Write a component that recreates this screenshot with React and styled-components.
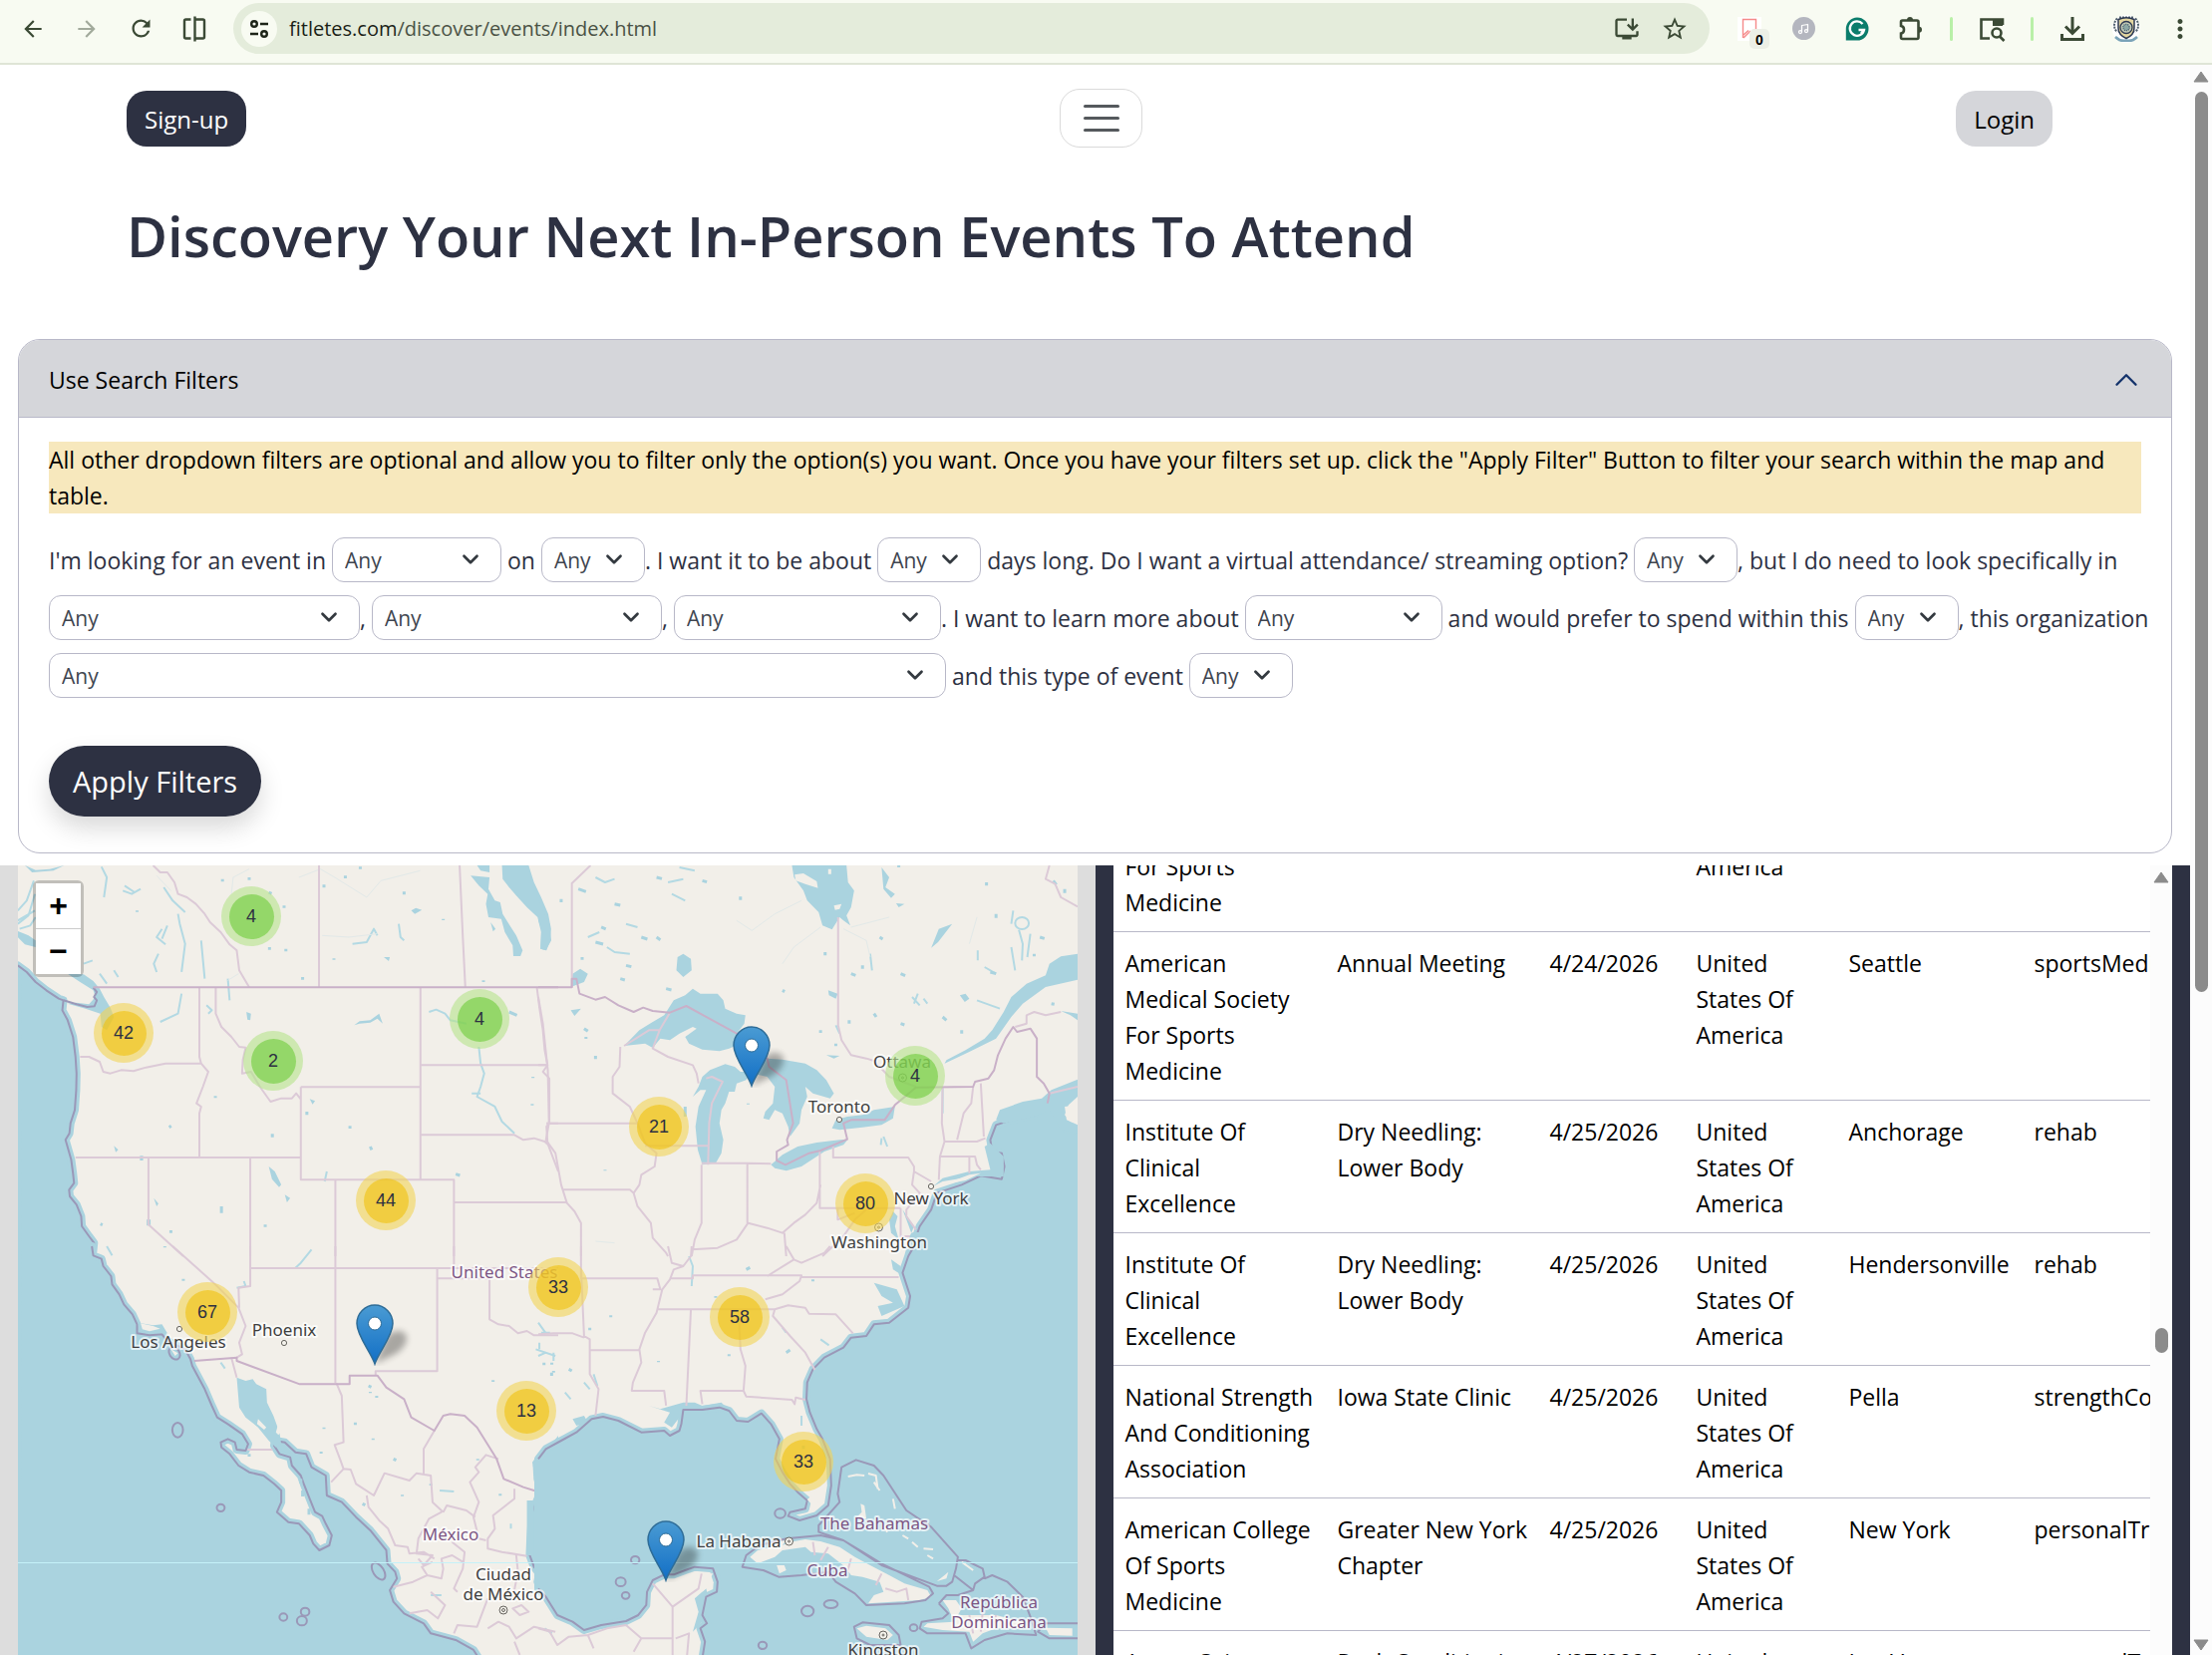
import React, { useLayoutEffect, useRef } from "react";
import styled, { createGlobalStyle } from "styled-components";
import { ChevronDown, ChevronUp, Music } from "lucide-react";
import {
  MdArrowBack,
  MdArrowForward,
  MdRefresh,
  MdOutlineInstallDesktop,
  MdStarBorder,
  MdMoreVert,
} from "react-icons/md";

const navy = "#2d3142";
const line = "#b8b8c8";
const water = "#aad3df";
const land = "#f2efe9";

const clusters = [
  { count: 4, x: 234, y: 51 },
  { count: 42, x: 106, y: 168 },
  { count: 2, x: 256, y: 196 },
  { count: 4, x: 463, y: 154 },
  { count: 44, x: 369, y: 336 },
  { count: 21, x: 643, y: 262 },
  { count: 4, x: 900, y: 211 },
  { count: 80, x: 850, y: 339 },
  { count: 67, x: 190, y: 448 },
  { count: 13, x: 510, y: 547 },
  { count: 33, x: 542, y: 423 },
  { count: 58, x: 724, y: 453 },
  { count: 33, x: 788, y: 598 },
];

const pins = [
  { name: "Las Cruces", x: 358, y: 500 },
  { name: "Michigan", x: 736, y: 221 },
  { name: "Merida", x: 650, y: 717 },
];

const usa = "United States Of America";

const events = [
  ["American Medical Society For Sports Medicine", "Annual Meeting", "4/24/2026", usa, "Seattle", "sportsMedicine"],
  ["American Medical Society For Sports Medicine", "Annual Meeting", "4/24/2026", usa, "Seattle", "sportsMedicine"],
  ["Institute Of Clinical Excellence", "Dry Needling: Lower Body", "4/25/2026", usa, "Anchorage", "rehab"],
  ["Institute Of Clinical Excellence", "Dry Needling: Lower Body", "4/25/2026", usa, "Hendersonville", "rehab"],
  ["National Strength And Conditioning Association", "Iowa State Clinic", "4/25/2026", usa, "Pella", "strengthConditioning"],
  ["American College Of Sports Medicine", "Greater New York Chapter", "4/25/2026", usa, "New York", "personalTraining"],
  ["Aspen Orient Fitness", "Rock Conditioning", "4/27/2026", usa, "Las Vegas", "personalTraining"],
];

const App = () => {
  return (
    <>
      <GlobalStyle />
      <Window>
        <Toolbar />
        <Viewport>
          <Page>
            <Nav>
              <NavButton $dark>Sign-up</NavButton>
              <MenuButton aria-label="Menu">
                <MenuBar />
                <MenuBar />
                <MenuBar />
              </MenuButton>
              <NavButton>Login</NavButton>
            </Nav>
            <Title>Discovery Your Next In-Person Events To Attend</Title>
            <Filters />
            <Results>
              <MapPanel />
              <EventsPanel />
            </Results>
          </Page>
          <ScrollTrack>
            <Arrow viewBox="0 0 16 12">
              <path d="M8 1 L15 11 H1Z" />
            </Arrow>
            <PageThumb />
            <Arrow viewBox="0 0 16 12">
              <path d="M1 1 H15 L8 11Z" />
            </Arrow>
          </ScrollTrack>
        </Viewport>
      </Window>
    </>
  );
};

const Toolbar = () => (
  <Bar>
    <NavIcons>
      <IconButton aria-label="Back">
        <MdArrowBack size={26} />
      </IconButton>
      <IconButton aria-label="Forward" $faded>
        <MdArrowForward size={26} />
      </IconButton>
      <IconButton aria-label="Reload">
        <MdRefresh size={27} />
      </IconButton>
      <IconButton aria-label="Split view">
        <svg width="26" height="28" viewBox="0 0 26 28" fill="none" stroke="currentColor" strokeWidth="2.4">
          <path d="M9.500 4.500H4.500Q3 4.500 3 6V22Q3 23.500 4.500 23.500H9.500M13.500 1.500V26.500M13.500 4.500H21.500Q23 4.500 23 6V22Q23 23.500 21.500 23.500H13.500" />
        </svg>
      </IconButton>
    </NavIcons>
    <AddressBar>
      <SiteInfo aria-label="Site information">
        <svg width="20" height="20" viewBox="0 0 20 20" fill="none" stroke="#1d2418" strokeWidth="2.4">
          <circle cx="5" cy="5" r="2.8" />
          <path d="M11 5H19M1 15H9" />
          <circle cx="15" cy="15" r="2.8" />
        </svg>
      </SiteInfo>
      <Url aria-label="Address">
        <b>fitletes.com</b>/discover/events/index.html
      </Url>
      <IconButton aria-label="Install">
        <MdOutlineInstallDesktop size={28} />
      </IconButton>
      <IconButton aria-label="Bookmark">
        <MdStarBorder size={28} />
      </IconButton>
    </AddressBar>
    <Extensions>
      <IconButton aria-label="Saved items">
        <Saved>
          <svg width="24" height="24" viewBox="0 0 24 24" fill="none" stroke="#f58a8a" strokeWidth="1.4">
            <path d="M5.5 21V2.500H18.500V14M6 21L13 14M6 18L11 13.500" />
          </svg>
          <Badge>0</Badge>
        </Saved>
      </IconButton>
      <IconButton aria-label="Music">
        <MusicDot>
          <Music size={12} strokeWidth={2.5} />
        </MusicDot>
      </IconButton>
      <IconButton aria-label="Grammar">
        <svg width="24" height="24" viewBox="0 0 24 24">
          <path d="M12 .5A11.500 11.500 0 1 1 12 23.500H.8V12A11.500 11.500 0 0 1 12 .5Z" fill="#0b7d6c" />
          <path d="M17.500 7A7.200 7.200 0 1 0 19 13H13.500M16 16.500L19 13" fill="none" stroke="#fff" strokeWidth="2.300" />
        </svg>
      </IconButton>
      <IconButton aria-label="Extensions">
        <svg width="26" height="26" viewBox="0 0 26 26" fill="none" stroke="currentColor" strokeWidth="2.600">
          <path d="M4.500 4.500H19Q20.500 4.500 20.500 6V21.500Q20.500 23 19 23H4.500Q3 23 3 21.500V17.500Q6 17 6 13.700Q6 10.500 3 10V6Q3 4.500 4.500 4.500Z" />
          <path d="M9 4A3 3 0 0 1 15 4ZM21 10.700A3 3 0 0 1 21 16.700Z" fill="currentColor" stroke="none" />
        </svg>
      </IconButton>
      <Divider />
      <IconButton aria-label="Search panel">
        <svg width="28" height="26" viewBox="0 0 28 26" fill="none" stroke="currentColor" strokeWidth="2.600">
          <path d="M12 22.500H3.500V3.500H25V9" />
          <path d="M15 3H25V10H15Z" fill="currentColor" stroke="none" />
          <circle cx="19" cy="17" r="4.500" />
          <path d="M22 20.500L26.500 25" />
        </svg>
      </IconButton>
      <Divider />
      <IconButton aria-label="Downloads">
        <svg width="26" height="26" viewBox="0 0 26 26" fill="none" stroke="currentColor" strokeWidth="3">
          <path d="M13 1V17M6 10.500L13 17.500L20 10.500M2.500 18V23.500H23.500V18" />
        </svg>
      </IconButton>
      <IconButton aria-label="Profile">
        <svg width="28" height="28" viewBox="0 0 28 28">
          <circle cx="14" cy="14" r="14" fill="#fff" />
          <path d="M5 3.500C1 7 1 14 5 17M23 3.500C27 7 27 14 23 17M7 2.500H21" fill="none" stroke="#50606e" strokeWidth="2" strokeDasharray="2 1" />
          <path d="M6 4.500Q14 1 22 4.500V13Q22 20 14 23.500Q6 20 6 13Z" fill="#e3d6a0" stroke="#2c3953" strokeWidth="1.500" />
          <circle cx="14" cy="12.500" r="6" fill="#c3ccb6" stroke="#2c3953" strokeWidth="1.300" />
          <circle cx="14" cy="12.500" r="3.200" fill="#8ba8a4" stroke="#40556a" strokeWidth="1.300" strokeDasharray="1 1" />
          <path d="M3 22Q8 27 14 25.500Q20 27 25 22" fill="none" stroke="#7aa3b8" strokeWidth="2.500" />
        </svg>
      </IconButton>
      <IconButton aria-label="More">
        <MdMoreVert size={30} />
      </IconButton>
    </Extensions>
  </Bar>
);

const Filters = () => (
  <Card>
    <CardHeader>
      Use Search Filters
      <ChevronUp size={38} strokeWidth={1.5} color="#14336b" />
    </CardHeader>
    <CardBody>
      <Note>
        All other dropdown filters are optional and allow you to filter only the option(s) you want. Once you have your
        filters set up. click the "Apply Filter" Button to filter your search within the map and table.
      </Note>
      <Sentence>
        <SentenceRow>
          I'm looking for an event in <Filter name="Month" width={170} /> on <Filter name="Day" width={104} />
          <Tail>. I want it to be about</Tail> <Filter name="Length" width={104} /> days long. Do I want a virtual
          attendance/ streaming option? <Filter name="Virtual" width={104} />
          <Tail>, but I do need to look specifically in</Tail>
        </SentenceRow>
        <SentenceRow>
          <Filter name="Country" width={312} />
          <Tail>,</Tail> <Filter name="State" width={291} />
          <Tail>,</Tail> <Filter name="City" width={268} />
          <Tail>. I want to learn more about</Tail> <Filter name="Topic" width={198} /> and would prefer to spend within
          this <Filter name="Price" width={104} />
          <Tail>, this organization</Tail>
        </SentenceRow>
        <SentenceRow>
          <Filter name="Organization" width={900} /> and this type of event <Filter name="Type" width={104} />
        </SentenceRow>
      </Sentence>
      <ApplyButton>Apply Filters</ApplyButton>
    </CardBody>
  </Card>
);

const Filter = ({ name, width }) => (
  <SelectWrap $width={width}>
    <Select aria-label={name} defaultValue="Any">
      <option>Any</option>
    </Select>
    <ChevronDown size={26} strokeWidth={2.5} />
  </SelectWrap>
);

const MapPanel = () => (
  <MapColumn>
    <MapBox>
      <MapArt />
      {clusters.map((c) => (
        <Cluster key={`${c.x}-${c.y}`} $few={c.count < 10} style={{ left: c.x, top: c.y }}>
          <span>{c.count}</span>
        </Cluster>
      ))}
      {pins.map((p) => (
        <Pin key={p.name} aria-label={p.name} style={{ left: p.x, top: p.y }}>
          <svg width="80" height="62" viewBox="0 0 80 62">
            <defs>
              <linearGradient id="pin" x1="0" y1="0" x2="0" y2="1">
                <stop offset="0" stopColor="#4a9bd3" />
                <stop offset="1" stopColor="#126fc6" />
              </linearGradient>
              <filter id="soft" x="-50%" y="-50%" width="200%" height="200%">
                <feGaussianBlur stdDeviation="3" />
              </filter>
            </defs>
            <path d="M19 60L30 34Q40 22 50 30Q54 40 40 50Z" fill="#000" opacity=".3" filter="url(#soft)" />
            <path
              d="M19 60C15 48 1 32 1 19.500A18 18.500 0 0 1 37 19.500C37 32 23 48 19 60Z"
              fill="url(#pin)"
              stroke="#2e6c97"
              strokeWidth="1.500"
            />
            <circle cx="19" cy="19.500" r="6.500" fill="#fff" stroke="#2e6c97" strokeWidth="1" />
          </svg>
        </Pin>
      ))}
      <ZoomControl>
        <ZoomButton aria-label="Zoom in">+</ZoomButton>
        <ZoomButton aria-label="Zoom out">−</ZoomButton>
      </ZoomControl>
    </MapBox>
  </MapColumn>
);

// A stretch of sea: the filled area runs a little past the drawn sea limit.
const Sea = ({ coast, close }) => (
  <>
    <path className="sea" d={`${coast} ${close}`} />
    <path className="limit" d={coast} />
  </>
);

const MapArt = () => (
  <MapSvg viewBox="18 868 1063 792" preserveAspectRatio="xMinYMin slice" aria-hidden="true">
    <rect x="18" y="868" width="1063" height="792" fill={land} />

    {/* north west */}
    <g transform="translate(0 860) scale(.35714 .33333)">
      <Sea
        coast="M50,325 L75,345 L100,375 L130,400 L165,425 L178,430 L175,460 L190,490 L205,540 L212,600 L215,650 L214,700 L210,760 L198,800 L195,830 L184,850 L192,880 L200,910 L205,950 L208,980 L194,1000 L196,1020 L215,1045 L228,1080 L230,1110 L250,1140 L264,1160 L260,1200"
        close="L50,1200Z"
      />
      <path className="lake" d="M50,222L80,235L100,250V270L70,262L50,240ZM190,350L235,352L262,372L280,395L292,420L310,452L320,480L300,520L285,510L282,470L240,455L190,440L215,437L250,442L268,420L262,400L225,375ZM70,24L90,45L150,40L180,24L140,35L100,38Z" />
      <path className="limit" d="M178,430 L215,442 L245,450 L265,448 L272,430 L264,420 L272,405 L262,392" />
      <path
        className="river"
        d="M50,160L75,130L95,70M50,200L80,175L98,110M55,215L85,205L100,180M50,190L98,160M345,100L370,110L395,95M350,85L378,105M285,28L300,60L292,120M460,90 L485,130 L520,165 M500,170L505,200L520,260 L510,345M440,345 L432,320 L445,290M455,215L440,240L465,262M470,205L455,245M565,250 L575,365M320,340L332,360M300,380L280,350M260,310L235,320M450,495 L500,470 L510,410M580,445L595,460L585,470M990,260 L1030,255 L1050,215 L1060,235M1120,200 L1125,240L1135,250M1205,465L1225,458L1250,470L1265,490L1310,500M1345,570L1350,620L1360,650L1350,690L1340,720L1390,750L1410,795L1445,830M1325,710H1350M640,365L645,430M918,945L912,975"
      />
      <path className="faint" d="M650,110L655,60L700,35M840,60L900,35L940,60L1030,120L1070,70L1180,40M905,235L980,240L1060,230M480,100L440,55M640,370L670,350" />
      <path
        className="lake"
        d="M1410,24 H1485 L1500,75 L1520,120 L1540,170 L1548,215 L1545,250 L1535,280 L1518,275 L1520,225 L1510,180 L1480,150 L1450,115 L1430,90 L1412,65ZM1322,55L1375,60L1372,95L1390,130L1405,135L1412,170L1432,205L1450,235L1468,280L1462,297L1442,297L1440,265L1418,225L1408,185L1372,180L1365,140L1370,110L1345,85ZM1340,24H1375V45L1350,40ZM1378,195L1392,215L1385,223ZM755,930L772,945L790,985L784,992L764,968ZM995,505L1010,493L1040,490L1065,470L1075,500L1060,485L1040,497L1010,500ZM692,465L705,470L703,490L695,488ZM1155,160L1168,152L1185,158L1165,170ZM1078,300H1095L1092,312ZM320,868L332,880L325,887ZM870,727L885,733L878,743ZM800,1015L815,1025L806,1038ZM432,1025L445,1042L440,1050ZM412,1090H423V1108H412ZM393,898H402V912H393Z"
      />
      <path className="speck" d="M625,65v8M700,60v8M755,105l8,4M798,145v7M757,270v8M803,275v8M850,360v8M910,82v9M970,55v8M1135,103v9M1245,185v4M938,304v4M1358,370v5M605,718v6M475,812l6,-4M765,832v10M862,765v10M983,808v8M1040,870l4,10M622,1050v20M745,1105v7M480,1122v8M282,1103l6,3M463,1170v4M1497,660v4M1495,742v4M1430,465l22,10M1280,953l12,4M385,160v4M1012,28v7" />
      <path
        className="state"
        d="M430,24 L450,45 L470,45 L490,75 L500,110 L525,120 L550,140 L575,170 L590,195 L620,225 L645,262 L665,280 L672,340 L700,391M896,24V391M1291,24L1300,240L1307,391M560,391V600L565,620L585,645L570,690L552,740L565,750L560,770V903M225,600L250,600L280,615L290,645L310,650L340,640L375,643L410,632L465,620H565M606,391V470L622,510L650,540L672,570L690,572L682,610L680,650L705,645L730,690L760,735L790,725L820,725L832,710L845,728M845,691H1181V970H845V691M212,903H845M417,903V1105L515,1200M703,903V1200M942,970V1200M1181,970H1275V1200M1275,1038H1568M1181,391V691M1181,625H1538M1181,835H1445L1470,850L1500,845L1530,855L1545,870M1508,391L1515,450L1525,520L1530,580L1538,625L1525,645L1543,665V800L1535,810L1538,860L1568,945M1535,800H1568"
      />
      <path className="border" d="M262,391H1568" />
    </g>

    {/* north east */}
    <g transform="translate(540 860) scale(.38265 .33333)">
      <Sea
        coast="M1414,820 L1385,818 L1370,790 L1360,750 L1335,740 L1305,755 L1300,775 L1240,790 L1200,805 L1185,850 L1190,885 L1215,890 L1222,930 L1215,968 L1160,958 L1110,985 L1045,1010 L1030,1060 L1000,1110 L985,1160 L975,1200"
        close="H1440V820Z"
      />
      <path className="lake" d="M1345,700L1414,668V745L1380,750L1385,790L1414,805V830L1370,820L1340,760L1300,780L1220,800L1200,790L1210,760L1270,735L1320,725ZM1170,870L1185,860L1220,900V960H1140L1060,975L1035,990L1060,965L1130,945L1185,940Z" />
      <path fill={land} d="M1414,720L1390,745L1380,775L1395,795L1414,800ZM1060,985L1130,955L1160,950L1120,972Z" />
      <path
        className="lake"
        d="M225,567L265,520L300,495L330,475L355,430L385,415L405,395L425,410L470,410L485,430L490,455L520,470L543,475L540,500L520,530L530,560L500,575L475,583L430,578L395,560L385,540L415,515L405,510L370,530L345,550L320,545L300,573L280,560ZM405,720L420,690L430,660L450,640L490,622L515,630L530,645L560,645L545,670L520,680L515,705L500,705L490,740L480,760L475,800L485,850L480,890L465,920L430,925L418,880L412,810L420,750L440,700L425,700ZM560,625L600,605L640,608L700,620L730,640L755,670L775,710L765,725L720,710L700,690L705,720L690,760L685,800L660,840L655,810L640,770L620,760L605,790L590,785L595,765L615,740L620,690L600,660L560,650ZM610,925L640,895L680,870L730,858L790,850L812,848L800,865L750,885L690,930L650,943L620,935ZM770,815L780,790L810,780L850,775L880,760L935,750L930,785L900,805L850,812L790,820Z"
      />
      <path className="lake" d="M665,24H808L812,75L828,100L820,150L808,175L818,205L800,190L790,180L770,217L745,205L735,165L705,130L695,100L670,60ZM1414,290L1370,298L1340,320L1330,355L1280,380L1240,420L1220,465L1190,520L1170,545L1120,580L1070,610L1065,620L1130,585L1200,545L1240,480L1270,440L1330,390L1414,368ZM365,300L380,290L400,305L402,340L380,360L362,340ZM0,130L12,160L30,200L34,250L20,280L6,275L8,215L0,190ZM85,390L90,350L110,335L130,350L120,375ZM1085,200L1050,215L1030,272L1048,255ZM1105,415L1120,410L1130,425L1118,435ZM85,460L112,455L95,477ZM755,595L790,597L775,605ZM760,400L785,410L780,425L762,415ZM900,30L920,60L910,90L935,110L925,122L905,95ZM938,138L960,140L945,150ZM930,1065L942,1080L935,1110L945,1150L925,1130L920,1090ZM1370,462L1414,470V490L1395,475ZM955,1060L985,1110L978,1130L965,1090Z" />
      <path fill={land} d="M672,52L695,48L730,72L733,92L700,80L675,70ZM775,145L795,140L790,155L778,158ZM760,35h8v15h-8Z" />
      <circle className="river" cx="1268" cy="198" r="18" fill="none" />
      <path className="river" d="M1260,218L1270,260L1268,310M1290,230L1282,300M1240,270L1250,340M1152,280V310M1150,430L1210,455M1245,160L1240,200M980,420L1000,445M995,410L985,440M1010,425L1020,440M780,505L790,530M870,290L875,340M180,270L200,285L240,290M150,60L175,75L200,65M230,200L260,210M340,75L380,65M130,240L160,225M1060,695V770M1170,330L1200,350M370,30L410,40M905,840L915,870M900,845L898,865M350,110L385,130" />
      <path className="faint" d="M690,130L620,170L560,220L520,190M740,210L670,270L640,320M800,215L860,250L870,300M1150,180L1130,260M150,1155L200,1160M820,210L920,180" />
      <path className="speck" d="M60,125v10M105,95l20,8M165,210l12,6M270,240l16,6M310,240l10,8M530,118v10M215,365l12,4M230,325l14,4M335,395l14,4M120,515l10,8M150,597v10M752,285v10M895,240l8,6M1200,170v12M1175,75v10M945,20v10M820,350l12,5M850,325v10M815,490v10M880,470l6,10M950,500l10,4M1060,480l10,10M1110,520v10M780,560v8M740,520v8M1315,240l12,4M1300,290v8M1345,440l8,2M200,140l15,4M115,300v8M150,255l20,6M310,60l14,4M430,70l12,4M385,750v30M550,740v3M175,940v3M1380,95v12M1350,70l8,12M640,400l6,4M1185,345l15,5M950,350l12,6M125,540v6" />
      <path
        className="state"
        d="M137,24L88,78V391M786,180V505L795,550L820,595L860,605L880,612L920,660L990,690M215,570L213,630L195,660V710L240,750L260,800L280,860L310,890L305,930L270,955L265,985L250,1010L260,1050L295,1100L300,1145L335,1190L340,1200M22,800H260M280,868H445M445,925L448,800L455,740L483,675L455,660L440,665M225,567L290,520H318M345,467L318,520L300,575L340,600L405,625L415,650L420,680M428,925V1100L410,1150L402,1200M428,920H548L610,922M548,922V1100M402,1180L470,1175L520,1150L550,1100L600,1115L640,1130L670,1100L700,1075L730,1040L740,985M738,882V1055H950M773,870V903H970L985,930V945L1030,975M985,945L980,985L1000,1010L965,1060V1080L990,1120M1060,690L1058,800L1065,855L1053,900L1050,970M1065,855H1150L1172,845M1053,900H1145L1150,925L1160,940M1130,903V950M1160,680L1168,840M1140,690L1135,740L1115,770L1098,850M62,1000H240L250,1010M0,420L12,500L25,640L28,800L20,850L45,890L60,985L75,1040L95,1065L112,1100V1200M0,625H22M0,1038H75M1340,24L1330,65L1355,80L1370,120L1414,148M1250,510L1280,500V475L1300,465L1330,475L1370,465M650,1200L645,1130M745,1200L800,1140L830,1090L860,1060M785,1055V1090L830,1070M950,1055V1140H985M1340,710L1414,690"
      />
      <path className="border" d="M0,391H88V365H100L108,410L150,428L175,420L210,445L250,465L275,452L300,462L345,467L388,447L520,530L600,605L605,630L650,670L668,800L652,850L655,865L625,885V912L648,925L710,890L740,882L810,848L800,800L820,790H908L935,745L990,692L1140,690L1145,675L1180,665L1195,640L1205,595L1225,545L1245,510L1255,525L1290,515L1307,545V660L1325,680L1340,710L1335,740" />
    </g>

    {/* south west */}
    <g transform="translate(0 1250) scale(.35714 .33333)">
      <Sea
        coast="M258,0L262,28L285,38L290,60L312,90L315,115L335,145L348,175L372,205L385,235V262L420,268L455,265L470,285L520,310L535,340L540,360L555,390L575,430L595,480L610,515L640,535L680,565L697,595L690,615L665,612L660,590L640,580L620,590L622,605L645,625L670,660L700,680L740,690L770,715L790,735V770L778,800L810,830L840,835L870,870L880,895L897,915L925,900L932,870L915,835L905,812L885,800L870,760L855,720L845,690L820,660L815,635L785,625L770,600L772,585L800,590L830,620L860,625L875,665L915,690L918,750L960,770L1000,815L1040,855L1085,915L1088,955L1110,980L1115,1000L1095,1035L1105,1070L1135,1105L1190,1135L1210,1165L1280,1185L1330,1215L1345,1240"
        close="L50,1240V0Z"
      />
      <Sea
        coast="M1568,595L1530,625L1508,660L1510,700L1520,735L1495,800L1490,880L1488,930L1500,965L1515,985L1510,1010L1540,1050L1568,1095"
        close="Z"
      />
      <path className="lake" d="M665,395L690,405L710,400L720,415L748,430L750,470L768,510L785,560L790,595L775,605L755,585L725,545L690,515L672,485ZM388,230L430,238L455,235L470,262L410,262L390,250ZM1535,615L1568,570V600L1520,650L1505,700L1495,650L1515,620ZM1480,765H1500V930H1480Z" />
      <path fill={land} d="M395,232L430,240L450,248L420,256L400,250ZM725,520L748,545L742,552L722,535ZM780,540L792,555L782,568L775,560ZM480,310L500,322L492,330Z" />
      <path className="river" d="M300,0L315,28M830,65L845,50L875,10M665,125L690,120L685,105M1235,735L1275,738M1210,1050H1240M620,350L632,368M1505,310L1560,330M1515,290V310M1520,260H1545M1435,835V850M1530,1150L1550,1165" />
      <path className="speck" d="M515,98v6M1035,420l8,4M1040,438v4M1058,450v6M998,530v8M910,545v5M1048,578v5M1105,640l8,4M1385,403v5M1405,745v6M1342,640v4M1210,715v5M1130,748v4M1018,775l8,4M902,618v6M1550,350v6M1555,375v5M700,625v8M845,700v14M850,735v18M868,790v18" />
      <g className="limit">
        <ellipse cx="499" cy="553" rx="15" ry="22" />
        <circle cx="620" cy="787" r="11" />
        <circle cx="857" cy="1100" r="12" />
        <circle cx="796" cy="1116" r="11" />
        <circle cx="848" cy="1127" r="14" />
        <ellipse cx="1063" cy="978" rx="15" ry="28" transform="rotate(-30 1063 978)" />
        <ellipse cx="490" cy="322" rx="14" ry="20" transform="rotate(-30 490 322)" />
      </g>
      <path
        className="state"
        d="M485,0L600,110L670,185L690,240L672,290L680,325L665,335M703,0V120L670,125L672,185M703,66H1568M942,0V412M1275,0V66M1228,66V376H1055V389M1228,97H1375V220L1400,235L1430,240L1455,262L1480,255L1500,268L1568,268M945,412L960,450L965,590L940,598L955,640L965,670L930,710M965,670L985,672L1000,715L1050,750L1080,683L1150,705L1170,683L1210,690L1215,770L1245,800M1220,555L1190,610V685M1245,800L1255,780L1310,795L1335,815M1030,750L1035,785L1065,825L1090,850L1110,900L1145,905L1150,925L1190,920L1220,940M1400,640L1365,628L1335,665L1345,680L1320,710L1345,770L1330,815L1345,880L1365,885M1445,730V760L1385,810L1390,850L1370,880V910L1410,920L1480,932M1240,800L1205,820L1175,880L1170,925L1215,930L1190,960L1175,940M1270,890L1305,920L1300,970L1275,1030L1285,1040M1105,1025L1160,1010L1200,990L1240,1000L1245,970L1240,940L1270,930L1300,950M1275,1165L1285,1140L1340,1145L1370,1060M1370,1150L1400,1130L1430,1145L1450,1180L1500,1145L1560,1160M1150,1105L1200,1095L1230,1120L1250,1080L1210,1040M1200,990L1185,965L1215,950M695,612H765M650,335L665,395M1440,1090L1465,1080L1485,1100L1460,1110ZM1450,930L1455,980L1440,1060M1460,1230L1445,1190"
      />
      <path className="border" d="M545,345L665,335V345L842,415H982V389H1060L1085,425L1135,460L1155,515L1220,555L1245,510L1265,505L1305,510L1340,545L1395,640L1415,700L1470,725L1500,735L1520,732" />
    </g>

    {/* south east */}
    <g transform="translate(540 1250) scale(.38265 .33333)">
      <path
        className="sea"
        d="M0,640L20,610L60,585L100,560L140,520L170,513L210,525L270,560L330,555L345,570L370,555L375,535L380,492H430L475,485L500,495L520,525L550,528L585,503L610,535L632,580L622,640L640,680L660,715L680,740L705,765L700,790L660,800L655,812L685,825L730,810L760,780L768,720L765,640L745,580L730,550L712,500L703,460L705,410L720,370L750,335L800,305L820,275L860,270L880,235L920,230L970,185L975,150L955,80L970,30L985,-30H1440V1240H430L437,1190L425,1150L442,1135L430,1110L440,1055L468,1040L470,1010L458,970L410,965L385,975L355,988H330L300,1005L285,1040L283,1080L262,1110L230,1128L165,1140L120,1155L90,1130L50,1110L20,1055L0,1030Z"
      />
      <path className="lake" d="M290,480L320,490L380,470L410,470L430,480L480,470L500,495L440,500H380L350,545L330,530L345,500ZM880,110L940,130L960,180L900,210L890,180L930,170L900,150ZM925,40L950,60V85L930,70ZM410,1060L440,1030L450,1080L430,1130L405,1160L420,1100ZM90,520L120,510L130,530L100,540Z" />
      <path
        className="limit"
        d="M0,640L20,610L60,585L100,560L140,520L170,513L210,525L270,560L330,555L345,570L370,555L375,535L380,492H430L475,485L500,495L520,525L550,528L585,503L610,535L632,580L622,640L640,680L660,715L680,740L705,765L700,790L660,800L655,812L685,825L730,810L760,780L768,720L765,640L745,580L730,550L712,500L703,460L705,410L720,370L750,335L800,305L820,275L860,270L880,235L920,230L970,185L975,150L955,80L970,30L985,0M430,1240L437,1190L425,1150L442,1135L430,1110L440,1055L468,1040L470,1010L458,970L410,965L385,975L355,988H330L300,1005L285,1040L283,1080L262,1110L230,1128L165,1140L120,1155L90,1130L50,1110L20,1055L0,1030"
      />
      <path
        fill={land}
        d="M555,935L575,915L610,905L620,890L650,885L640,900L660,890L700,882L740,888L790,905L830,935L870,960L920,990L960,1015L1020,1035L1030,1055L1000,1065L865,1075L880,1050L905,1040L895,1010L850,995L820,990L805,965L760,925L715,920L700,905L640,915L620,935L575,955ZM625,960L645,960L650,975L632,985ZM1060,1065L1095,1065L1110,1090L1100,1110L1200,1110L1270,1130L1285,1150L1200,1150L1165,1165L1140,1190L1130,1160L1060,1155L1010,1145L1020,1135L1090,1130L1075,1090ZM1330,1148L1400,1150V1172L1340,1170ZM835,1150L860,1142L910,1150L930,1170L915,1185L860,1175ZM845,775L855,780L860,820L835,815L848,800ZM1075,980L1070,1000L1045,1008L1065,990ZM705,762L755,715L748,765L715,775ZM458,985L445,1010L440,1030L430,1040L430,985Z"
      />
      <path fill="none" stroke={land} strokeWidth="2" vectorEffect="non-scaling-stroke" d="M812,693L835,688L855,690M865,684L885,690L890,730M880,710L895,735M930,760L935,790M955,870L970,880M980,890L995,905M1010,910L1035,912M1020,930L1035,940M1110,950L1140,975M905,840L915,860" />
      <path
        className="limit"
        d="M535,965L545,930L580,900L650,880L740,870L800,885L850,920L900,955L1025,1025L1035,1045L1015,1065L960,1075L860,1080L830,1045L780,1010L760,980L690,990L630,995L590,975ZM795,665L833,643L880,660L905,690L965,795L1030,845L1100,935L1095,970L1085,1010L1070,1022H1045L900,960L800,885L735,860V840L790,770L785,745ZM1100,945H1120L1165,970L1170,995L1145,1015L1140,1035L1090,990M1170,1000L1190,990L1230,1010L1270,1055L1290,1115M1050,1075L1070,1050H1100L1140,1035M1290,1115L1305,1170L1230,1165L1170,1185L1135,1210L1120,1165H1020L1000,1150L1005,1130L1060,1120L1075,1105L1050,1075M1414,1135H1330L1310,1160L1340,1180H1414M828,1145L850,1132L920,1140L945,1170L950,1200H870L835,1180Z"
      />
      <g className="limit">
        <circle cx="634" cy="804" r="14" />
        <circle cx="254" cy="944" r="11" />
        <circle cx="216" cy="1010" r="13" />
        <circle cx="229" cy="1051" r="10" />
        <circle cx="706" cy="1098" r="16" />
        <ellipse cx="767" cy="1077" rx="18" ry="12" />
        <circle cx="588" cy="1201" r="11" />
        <circle cx="984" cy="1148" r="10" />
      </g>
      <path className="river" d="M395,30L405,60L402,120M0,230L20,262M145,385L155,420M120,410L135,430M640,245L650,260M740,280L762,298M690,510V540M0,330L20,320M40,320V345M70,440L85,460" />
      <path className="speck" d="M75,125v8M135,245v8M190,208v6M500,325v6M315,345v4M720,100v6M35,380v10M80,370l8,5M15,350v8M545,70l10,-6M465,150v5M650,320l10,-8M695,600v10" />
      <path
        className="state"
        d="M112,0V97H312L320,130H300M340,0L350,50L380,60L355,70L345,100L325,130L310,200L280,260L265,310L270,350L248,410L245,435H330L335,480M112,66L120,270L135,280V385L158,430L150,510M135,313H265M0,265L40,262L90,262L120,275M312,190H620M345,97H405V88H690L685,105L640,145L595,160M690,93H945M380,60L400,30L402,0M600,90L670,40L650,0M670,40L690,50L750,20L765,0M620,190L655,178L700,185L710,203L780,205L825,262M620,190L615,210L660,270L700,320L725,372M400,190L388,480M525,190L530,310L543,360L538,435L545,452L665,462L672,475L675,455L700,462M538,435H425L430,475M300,1015L352,1085L420,1030L428,985M352,1085V1230M270,1180H352M0,1150L30,1160L50,1200L80,1175L130,1170L180,1150L230,1140L270,1180L250,1220M130,1170L145,1210M360,1180L395,1165L390,1230M720,890L725,930M760,905L740,945M820,940L810,980M900,985L885,1020M910,1030L940,1040L965,1030L970,1065M1130,1110L1140,1165M1165,1100L1160,1160M1200,1110L1190,1150M1230,1120L1220,1150"
      />
    </g>

    <path d="M18,1567.500H1100" stroke="#c4f1f8" strokeWidth="1" />

    <g className="city">
      <circle cx="180" cy="1333" r="2.600" />
      <circle cx="285" cy="1347" r="2.600" />
      <circle cx="842" cy="1123" r="2.600" />
      <circle cx="934" cy="1190" r="2.600" />
      <circle cx="881.500" cy="1231" r="4" />
      <circle cx="881.500" cy="1231" r="1" />
      <circle cx="905.500" cy="1081" r="4" />
      <circle cx="905.500" cy="1081" r="1" />
      <circle cx="791.500" cy="1546" r="4" />
      <circle cx="791.500" cy="1546" r="1" />
      <circle cx="505" cy="1615" r="4" />
      <circle cx="505" cy="1615" r="1.500" />
      <circle cx="886" cy="1640" r="4" />
      <circle cx="886" cy="1640" r="1" />
    </g>
    <g className="town">
      <text x="179" y="1352">Los Angeles</text>
      <text x="285" y="1340">Phoenix</text>
      <text x="842" y="1116">Toronto</text>
      <text x="905" y="1071">Ottawa</text>
      <text x="934" y="1208">New York</text>
      <text x="882" y="1252">Washington</text>
      <text x="741" y="1552">La Habana</text>
      <text x="505" y="1585">Ciudad</text>
      <text x="505" y="1605">de México</text>
      <text x="886" y="1661">Kingston</text>
    </g>
    <g className="country">
      <text x="506" y="1282">United States</text>
      <text x="452" y="1545">México</text>
      <text x="877" y="1534">The Bahamas</text>
      <text x="830" y="1581">Cuba</text>
      <text x="1002" y="1613">República</text>
      <text x="1002" y="1633">Dominicana</text>
    </g>
  </MapSvg>
);

const EventsPanel = () => {
  const scroller = useRef(null);

  useLayoutEffect(() => {
    scroller.current.scrollTop = 102;
  }, []);

  return (
    <TableColumn>
      <Scroller ref={scroller}>
        <Table>
          <colgroup>
            <Col $width={213} />
            <Col $width={213} />
            <Col $width={147} />
            <Col $width={153} />
            <Col $width={186} />
            <Col $width={280} />
          </colgroup>
          <tbody>
            {events.map((row, i) => (
              <tr key={i}>
                {row.map((cell, j) => (
                  <Cell key={j}>{cell}</Cell>
                ))}
              </tr>
            ))}
          </tbody>
        </Table>
      </Scroller>
      <ScrollTrack>
        <Arrow viewBox="0 0 16 12">
          <path d="M8 1 L15 11 H1Z" />
        </Arrow>
        <TableThumb />
      </ScrollTrack>
    </TableColumn>
  );
};

const GlobalStyle = createGlobalStyle`
  * {
    box-sizing: border-box;
  }
  body {
    margin: 0;
    background: #fff;
    color: #000;
    font-family: "Open Sans", "Noto Sans", sans-serif;
    font-size: 23px;
    line-height: 36px;
  }
  button, select {
    font-family: inherit;
    margin: 0;
    cursor: pointer;
  }
`;

const Window = styled.div`
  display: flex;
  flex-direction: column;
  height: 100vh;
  overflow: hidden;
`;

const Bar = styled.header`
  display: flex;
  align-items: center;
  flex: none;
  height: 65px;
  padding: 0 14px 6px 15px;
  background: #f8fbf2;
  border-bottom: 2px solid #dfe5d6;
`;

const NavIcons = styled.div`
  display: flex;
  gap: 18px;
  margin-right: 21px;
`;

const IconButton = styled.button`
  display: flex;
  align-items: center;
  justify-content: center;
  flex: none;
  width: 36px;
  height: 36px;
  padding: 0;
  border: none;
  background: none;
  color: #3b4a35;
  opacity: ${(props) => (props.$faded ? 0.45 : 1)};
`;

const AddressBar = styled.div`
  display: flex;
  align-items: center;
  flex: 1;
  gap: 12px;
  height: 51px;
  padding: 0 17px 0 8px;
  border-radius: 26px;
  background: #e4ecdb;
`;

const SiteInfo = styled(IconButton)`
  border-radius: 50%;
  background: #f8fbf2;
`;

const Url = styled.div`
  flex: 1;
  font-size: 20px;
  color: #4a5245;

  b {
    font-weight: 400;
    color: #1a1f17;
  }
`;

const Extensions = styled.div`
  display: flex;
  align-items: center;
  gap: 18px;
  margin-left: 22px;
`;

const Saved = styled.span`
  position: relative;
  width: 24px;
  height: 24px;
  background: #fff;
`;

const Badge = styled.span`
  position: absolute;
  left: 12px;
  top: 12px;
  width: 20px;
  height: 20px;
  border-radius: 5px;
  background: #ecefe6;
  color: #000;
  font: bold 14px/22px "Liberation Sans", sans-serif;
  text-align: center;
`;

const MusicDot = styled.span`
  display: flex;
  align-items: center;
  justify-content: center;
  width: 23px;
  height: 23px;
  border-radius: 50%;
  background: #b4b6bf;
  color: #fff;
`;

const Divider = styled.span`
  width: 3px;
  height: 24px;
  margin: 0 3px;
  border-radius: 2px;
  background: #b9f0a8;
`;

const Viewport = styled.div`
  display: flex;
  flex: 1;
  min-height: 0;
`;

const Page = styled.main`
  display: flex;
  flex-direction: column;
  flex: 1;
  min-width: 0;
`;

const ScrollTrack = styled.div`
  display: flex;
  flex-direction: column;
  align-items: center;
  flex: none;
  width: 22px;
  padding: 6px 0 4px;
  background: #fcfcfc;
`;

const Arrow = styled.svg`
  flex: none;
  width: 16px;
  height: 12px;
  fill: #8b8b8b;
  stroke: #8b8b8b;
  stroke-linejoin: round;
`;

const PageThumb = styled.div`
  width: 13px;
  height: 57%;
  margin: 9px 0 auto;
  border-radius: 7px;
  background: #8b8b8b;
`;

const TableThumb = styled.div`
  width: 13px;
  height: 25px;
  margin-top: 446px;
  border-radius: 7px;
  background: #8b8b8b;
`;

const Nav = styled.nav`
  display: flex;
  align-items: center;
  justify-content: space-between;
  padding: 24px 138px 0 127px;
`;

const NavButton = styled.button`
  height: 56px;
  padding: 2px 18px 0;
  border: none;
  border-radius: 20px;
  font-size: 24px;
  color: ${(props) => (props.$dark ? "#fff" : "#000")};
  background: ${(props) => (props.$dark ? navy : "#d5d6da")};
`;

const MenuButton = styled.button`
  display: flex;
  flex-direction: column;
  align-items: center;
  justify-content: center;
  gap: 9px;
  width: 83px;
  height: 59px;
  border: 1px solid #dadada;
  border-radius: 20px;
  background: #fff;
`;

const MenuBar = styled.span`
  width: 36px;
  height: 3px;
  border-radius: 2px;
  background: #55595d;
`;

const Title = styled.h1`
  margin: 52px 127px 68px;
  font-size: 56px;
  line-height: 72px;
  font-weight: 600;
  color: ${navy};
`;

const Card = styled.section`
  margin: 0 18px 12px;
  border: 1px solid ${line};
  border-radius: 22px;
  background: #fff;
  overflow: hidden;
`;

const CardHeader = styled.button`
  display: flex;
  align-items: center;
  justify-content: space-between;
  width: 100%;
  height: 78px;
  padding: 2px 26px 0 30px;
  border: none;
  border-bottom: 1px solid ${line};
  background: #d5d6da;
  font-size: 23px;
  color: #000;
`;

const CardBody = styled.div`
  padding: 24px 30px 36px;
`;

const Note = styled.p`
  margin: 0 0 24px;
  padding: 0;
  background: #f7e8bd;
`;

const Sentence = styled.div`
  display: grid;
  gap: 13px;
  margin-bottom: 48px;
  color: ${navy};
`;

const SentenceRow = styled.div`
  display: flex;
  align-items: center;
  gap: 6px;
  height: 45px;
  white-space: nowrap;
`;

const Tail = styled.span`
  margin-left: -6px;
`;

const SelectWrap = styled.span`
  position: relative;
  flex: none;
  width: ${(props) => props.$width}px;
  height: 45px;

  svg {
    position: absolute;
    right: 18px;
    top: 9px;
    color: #343a40;
    pointer-events: none;
  }
`;

const Select = styled.select`
  appearance: none;
  width: 100%;
  height: 100%;
  padding: 0 12px;
  border: 1px solid ${line};
  border-radius: 12px;
  background: #fff;
  color: #40454f;
  font-size: 21px;
`;

const ApplyButton = styled.button`
  display: block;
  height: 71px;
  padding: 0 24px;
  border: none;
  border-radius: 36px;
  background: ${navy};
  color: #fff;
  font-size: 29px;
  box-shadow: 0 12px 24px rgba(0, 0, 0, 0.15);
`;

const Results = styled.section`
  display: flex;
  flex: 1;
  min-height: 0;
`;

const MapColumn = styled.div`
  flex: 1;
  min-width: 0;
  padding: 0 18px;
  background: #ddd;
`;

const MapBox = styled.div`
  position: relative;
  height: 100%;
  overflow: hidden;
`;

const MapSvg = styled.svg`
  display: block;
  width: 100%;
  height: 100%;

  path,
  circle,
  ellipse {
    vector-effect: non-scaling-stroke;
    stroke-linejoin: round;
  }
  .sea {
    fill: ${water};
    stroke: ${water};
    stroke-width: 8px;
  }
  .lake {
    fill: ${water};
  }
  .limit {
    fill: none;
    stroke: #9a98b8;
    stroke-width: 2px;
  }
  .river {
    fill: none;
    stroke: #b3d9e3;
    stroke-width: 2px;
  }
  .faint {
    fill: none;
    stroke: #e2e9e8;
    stroke-width: 1px;
  }
  .speck {
    fill: none;
    stroke: ${water};
    stroke-width: 3px;
  }
  .state {
    fill: none;
    stroke: #dccad7;
    stroke-width: 2px;
  }
  .border {
    fill: none;
    stroke: #c9b0c8;
    stroke-width: 2px;
  }
  .city circle {
    fill: #f4f2ec;
    stroke: #66645f;
    stroke-width: 1px;
  }
  text {
    font-family: "Noto Sans", sans-serif;
    font-size: 17px;
    text-anchor: middle;
    paint-order: stroke;
    stroke: rgba(255, 255, 255, 0.7);
    stroke-width: 4px;
    stroke-linejoin: round;
  }
  .town text {
    fill: #3f3f3f;
  }
  .country text {
    fill: #7d5684;
  }
`;

const Cluster = styled.button`
  position: absolute;
  display: flex;
  align-items: center;
  justify-content: center;
  width: 60px;
  height: 60px;
  padding: 0;
  border: none;
  border-radius: 50%;
  transform: translate(-50%, -50%);
  background: ${(props) => (props.$few ? "rgba(181, 226, 140, 0.6)" : "rgba(241, 211, 87, 0.6)")};

  span {
    width: 45px;
    height: 45px;
    border-radius: 50%;
    background: ${(props) => (props.$few ? "rgba(110, 204, 57, 0.6)" : "rgba(240, 194, 12, 0.6)")};
    color: ${navy};
    font: 18px/45px "Liberation Sans", Arial, sans-serif;
  }
`;

const Pin = styled.button`
  position: absolute;
  width: 38px;
  height: 60px;
  padding: 0;
  border: none;
  background: none;
  transform: translate(-50%, -100%);

  svg {
    display: block;
  }
`;

const ZoomControl = styled.div`
  position: absolute;
  left: 15px;
  top: 15px;
  display: grid;
  border: 3px solid rgba(0, 0, 0, 0.2);
  border-radius: 6px;
  background-clip: padding-box;
`;

const ZoomButton = styled.button`
  width: 45px;
  height: 45px;
  padding: 0;
  border: none;
  background: #fff;
  color: #000;
  font: bold 32px/45px "Liberation Sans", Arial, sans-serif;

  & + & {
    height: 46px;
    border-top: 1px solid #ccc;
  }
`;

const TableColumn = styled.div`
  display: flex;
  flex: 1;
  min-width: 0;
  padding: 0 18px;
  background: ${navy};
`;

const Scroller = styled.div`
  flex: 1;
  min-width: 0;
  overflow: hidden;
  background: #fff;
`;

const Table = styled.table`
  width: 1192px;
  table-layout: fixed;
  border-collapse: separate;
  border-spacing: 0;
`;

const Col = styled.col`
  width: ${(props) => props.$width}px;
`;

const Cell = styled.td`
  padding: 13px 4px 11px 12px;
  border-bottom: 1px solid ${line};
  vertical-align: top;

  &:first-child {
    padding-right: 12px;
  }
`;

export default App;
